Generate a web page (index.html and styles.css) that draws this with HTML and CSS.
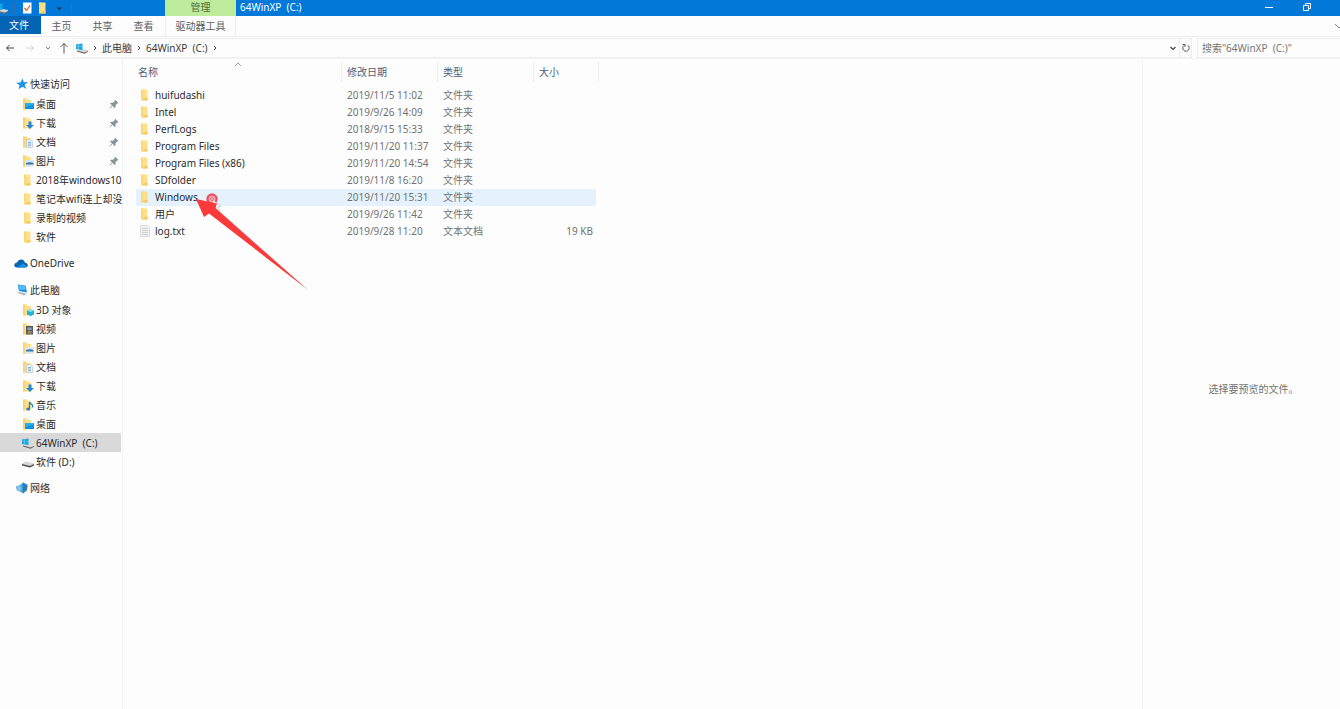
FILE: index.html
```html
<!DOCTYPE html>
<html lang="zh-CN">
<head>
<meta charset="utf-8">
<title>64WinXP (C:)</title>
<link rel="stylesheet" href="styles.css">
</head>
<body>
<svg class="defs" aria-hidden="true">
  <symbol id="folder" viewBox="0 0 12 12"><path d="M2 .5h6.500v11H2z" fill="#ffe08a"/><path d="M2 .5h2v10.500H2z" fill="#fbd873"/><path d="M4.500 9.500l4-1v3h-5z" fill="#f3cb66"/></symbol>
  <symbol id="base" viewBox="0 0 12 12"><path d="M1 .5h4l1 1.500h3v9.500H1z" fill="#ffe08a"/><path d="M1 .5h2v11H1z" fill="#f9d371"/></symbol>
  <symbol id="desktop" viewBox="0 0 12 12"><use href="#base"/><path d="M3 5h9v6H3z" fill="#0a95e6"/><path d="M3 5h9v1.500L3 9z" fill="#27aef5"/></symbol>
  <symbol id="download" viewBox="0 0 12 12"><use href="#base"/><path d="M6.500 4.500h3V8H12l-4 4-4-4h2.500z" fill="#2786d3"/></symbol>
  <symbol id="doc" viewBox="0 0 12 12"><use href="#base"/><path d="M4.500 3.500h4l2 2v6h-6z" fill="#e8f0f5" stroke="#a9bdca" stroke-width=".6"/><path d="M6 6.500h3M6 8h3M6 9.500h3" stroke="#5f9dc9" stroke-width=".7"/></symbol>
  <symbol id="picture" viewBox="0 0 12 12"><use href="#base"/><path d="M3 5h9v6.500H3z" fill="#d7e9f5"/><path d="M4 8q4-1.500 7.500 0v1.500H4z" fill="#3878a9"/></symbol>
  <symbol id="cube" viewBox="0 0 12 12"><use href="#base"/><path d="M8.500 5L12 6.500v4L8.500 12 5 10.500v-4z" fill="#1eb5d6"/><path d="M8.500 5L12 6.500 8.500 8 5 6.500z" fill="#8ce4f2"/></symbol>
  <symbol id="video" viewBox="0 0 12 12"><use href="#base"/><path d="M4 3h7v8.500H4z" fill="#565b65"/><path d="M5.500 4.500h4v2.500h-4z" fill="#8fa3bc"/><path d="M5.500 8h4v2.500h-4z" fill="#a88b55"/></symbol>
  <symbol id="music" viewBox="0 0 12 12"><use href="#base"/><path d="M7.500 3v6.500M7.500 3q1 2 3 3 .5 1-.5 2.500" fill="none" stroke="#1582cc" stroke-width="1.300"/><ellipse cx="6.200" cy="10" rx="1.900" ry="1.500" fill="#1582cc"/></symbol>
  <symbol id="drive" viewBox="0 0 12 12"><path d="M0 7.500L4 5.500l8 2v1.500L8 11.500 0 9z" fill="#d5d5d5"/><path d="M0 8l8 2 4-2v1.500L8 11.500 0 9.500z" fill="#4e4e4e"/></symbol>
  <symbol id="windrive" viewBox="0 0 12 12"><path d="M1 8L4 6.500l8 1.500v1.500L8.500 11.500 1 9.500z" fill="#d8d8d8"/><path d="M1 8.500l7.500 2L12 9v.8l-3.500 2L1 9.500z" fill="#666"/><path d="M0 2.500l2.700-.5v2.700H0zM3 2l3.500-.5v3.200H3zM0 5h2.700v2.500L0 7zM3 5h3.500v3L3 7.500z" fill="#12a8ea"/></symbol>
  <symbol id="star" viewBox="0 0 12 12"><path d="M6.500.5l1.300 3.800 4.200-.2-3.300 2.700 1.600 4.200L6.500 8.800 2.600 11.300l1-4.100L0 4.700l4.500-.3z" fill="#1c95e3"/></symbol>
  <symbol id="cloud" viewBox="0 0 14 12"><path d="M3 10.500Q0 10.300 .3 7.800 .8 5.800 3 5.500 4.500 2 8 2.500q2.500.5 3 3.300 3 .5 2.800 2.700-.3 2-2.500 2z" fill="#0a64b4"/><path d="M3 10.500l6-4 4.300 3q-.8 1-2 1z" fill="#1d8fe0"/></symbol>
  <symbol id="pc" viewBox="0 0 12 12"><path d="M1.500.5L9.500 1.500 11 8.500 3 7z" fill="#1a8fe0"/><path d="M2 1l7 1 .8 3.500L2.800 6z" fill="#5ab9f1"/><path d="M1 8.500L4 8l7 1.700-3 1.800z" fill="#aebdc9"/></symbol>
  <symbol id="network" viewBox="0 0 12 12"><path d="M0 4.500L4 3l3-2.500 4.500 2.500-.5 5-4 3.500-3-2-3-1z" fill="#4aa7dd"/><path d="M7 .5l4.500 2.500-.5 5-4 3.500-.5-5z" fill="#2b80bb"/><path d="M0 4.500l4-1 2 3-2 3-3-1z" fill="#7dc2e8"/></symbol>
  <symbol id="text" viewBox="0 0 12 12"><path d="M1.500.5h7l2 2v9h-9z" fill="#f1f1f1" stroke="#d0d0d0" stroke-width=".7"/><path d="M3 3.500h6M3 5.500h6M3 7.500h6M3 9.500h6" stroke="#b9c3ca" stroke-width=".7"/></symbol>
  <symbol id="pin" viewBox="0 0 12 12"><path d="M7 1.500L10.500 5l-1 .5-.5 0L7.500 7.500l0 2-1 .5-2-2.300L2 10.500l-.5-.5L4 7.300 2 5.500 3 4.700l2 0L6.700 3z" fill="#8a949c"/></symbol>
</svg>

<header class="titlebar">
  <div class="quick">
    <svg class="icon"><use href="#windrive"/></svg>
    <span class="bar"></span>
    <svg class="icon" viewBox="0 0 12 12"><path d="M2 .5h8.500v11H2z" fill="#fff"/><path d="M3.500 6l2 2.500L9 3.500" fill="none" stroke="#e0622c" stroke-width="1.300"/></svg>
    <svg class="icon"><use href="#folder"/></svg>
    <svg class="icon" viewBox="0 0 12 12"><path d="M4 5.500h4.500L6.200 8z" fill="#06233f"/></svg>
    <span class="bar"></span>
  </div>
  <div class="context">管理</div>
  <h1 class="title">64WinXP  (C:)</h1>
  <div class="controls">
    <button aria-label="最小化"><svg class="icon" viewBox="0 0 12 12"><path d="M2 6.500h8" stroke="#fff" fill="none"/></svg></button>
    <button aria-label="还原"><svg class="icon" viewBox="0 0 12 12"><path d="M2.500 4.500h5v5h-5zM4.500 4V2.500h5v5H8" stroke="#fff" fill="none"/></svg></button>
  </div>
</header>

<nav class="tabs">
  <button class="tab file">文件</button>
  <button class="tab">主页</button>
  <button class="tab">共享</button>
  <button class="tab">查看</button>
  <button class="tab tool">驱动器工具</button>
  <button class="expand" aria-label="展开功能区"><svg class="icon" viewBox="0 0 12 12"><path d="M3 4l4 4 4-4" stroke="#888" fill="none"/></svg></button>
</nav>

<div class="navbar">
  <div class="arrows">
    <button aria-label="后退"><svg class="icon" viewBox="0 0 12 12"><path d="M10 6H2.500M5.500 3l-3 3 3 3" stroke="#444" fill="none"/></svg></button>
    <button aria-label="前进"><svg class="icon" viewBox="0 0 12 12"><path d="M2 6h7.500M6.500 3l3 3-3 3" stroke="#d2d2d2" fill="none"/></svg></button>
    <button class="small" aria-label="最近"><svg class="icon" viewBox="0 0 12 12"><path d="M4 5l2 2 2-2" stroke="#777" fill="none"/></svg></button>
    <button aria-label="上移"><svg class="icon" viewBox="0 0 12 12"><path d="M6 11.500v-10M2.500 5L6 1.500 9.500 5" stroke="#555" fill="none"/></svg></button>
  </div>
  <div class="address">
    <svg class="icon"><use href="#windrive"/></svg>
    <svg class="chev" viewBox="0 0 6 12"><path d="M2 4l2 2-2 2" stroke="#444" fill="none"/></svg>
    <span>此电脑</span>
    <svg class="chev" viewBox="0 0 6 12"><path d="M2 4l2 2-2 2" stroke="#444" fill="none"/></svg>
    <span>64WinXP  (C:)</span>
    <svg class="chev" viewBox="0 0 6 12"><path d="M2 4l2 2-2 2" stroke="#444" fill="none"/></svg>
    <button class="drop" aria-label="历史记录"><svg class="icon" viewBox="0 0 12 12"><path d="M3.500 5L6 7.500 8.500 5" stroke="#444" stroke-width="1.200" fill="none"/></svg></button>
    <button class="refresh" aria-label="刷新"><svg class="icon" viewBox="0 0 12 12"><path d="M7.500 3.200A3.200 3.200 0 1 1 4 3.500M2.500 2.500H5V5" stroke="#555" fill="none"/></svg></button>
  </div>
  <input class="search" type="text" aria-label="搜索" placeholder='搜索"64WinXP  (C:)"'>
</div>

<div class="body">
  <aside class="tree">
    <ul>
      <li class="head"><svg class="icon"><use href="#star"/></svg>快速访问</li>
      <li><svg class="icon"><use href="#desktop"/></svg><span>桌面</span><svg class="icon pin"><use href="#pin"/></svg></li>
      <li><svg class="icon"><use href="#download"/></svg><span>下载</span><svg class="icon pin"><use href="#pin"/></svg></li>
      <li><svg class="icon"><use href="#doc"/></svg><span>文档</span><svg class="icon pin"><use href="#pin"/></svg></li>
      <li><svg class="icon"><use href="#picture"/></svg><span>图片</span><svg class="icon pin"><use href="#pin"/></svg></li>
      <li><svg class="icon"><use href="#folder"/></svg><span>2018年windows10</span></li>
      <li><svg class="icon"><use href="#folder"/></svg><span>笔记本wifi连上却没</span></li>
      <li><svg class="icon"><use href="#folder"/></svg><span>录制的视频</span></li>
      <li><svg class="icon"><use href="#folder"/></svg><span>软件</span></li>
    </ul>
    <ul>
      <li class="head"><svg class="icon cloud"><use href="#cloud"/></svg>OneDrive</li>
    </ul>
    <ul>
      <li class="head"><svg class="icon"><use href="#pc"/></svg>此电脑</li>
      <li><svg class="icon"><use href="#cube"/></svg><span>3D 对象</span></li>
      <li><svg class="icon"><use href="#video"/></svg><span>视频</span></li>
      <li><svg class="icon"><use href="#picture"/></svg><span>图片</span></li>
      <li><svg class="icon"><use href="#doc"/></svg><span>文档</span></li>
      <li><svg class="icon"><use href="#download"/></svg><span>下载</span></li>
      <li><svg class="icon"><use href="#music"/></svg><span>音乐</span></li>
      <li><svg class="icon"><use href="#desktop"/></svg><span>桌面</span></li>
      <li class="current"><svg class="icon"><use href="#windrive"/></svg><span>64WinXP  (C:)</span></li>
      <li><svg class="icon"><use href="#drive"/></svg><span>软件 (D:)</span></li>
    </ul>
    <ul>
      <li class="head"><svg class="icon"><use href="#network"/></svg>网络</li>
    </ul>
  </aside>

  <main class="files">
    <table>
      <colgroup><col class="c-name"><col class="c-mid"><col class="c-mid"><col class="c-size"></colgroup>
      <thead>
        <tr><th>名称<svg class="sort" viewBox="0 0 8 5"><path d="M1 4l3-3 3 3" stroke="#999" fill="none"/></svg></th><th>修改日期</th><th>类型</th><th>大小</th></tr>
      </thead>
      <tbody>
        <tr><td><svg class="icon"><use href="#folder"/></svg>huifudashi</td><td>2019/11/5 11:02</td><td>文件夹</td><td></td></tr>
        <tr><td><svg class="icon"><use href="#folder"/></svg>Intel</td><td>2019/9/26 14:09</td><td>文件夹</td><td></td></tr>
        <tr><td><svg class="icon"><use href="#folder"/></svg>PerfLogs</td><td>2018/9/15 15:33</td><td>文件夹</td><td></td></tr>
        <tr><td><svg class="icon"><use href="#folder"/></svg>Program Files</td><td>2019/11/20 11:37</td><td>文件夹</td><td></td></tr>
        <tr><td><svg class="icon"><use href="#folder"/></svg>Program Files (x86)</td><td>2019/11/20 14:54</td><td>文件夹</td><td></td></tr>
        <tr><td><svg class="icon"><use href="#folder"/></svg>SDfolder</td><td>2019/11/8 16:20</td><td>文件夹</td><td></td></tr>
        <tr class="hover"><td><svg class="icon"><use href="#folder"/></svg>Windows</td><td>2019/11/20 15:31</td><td>文件夹</td><td></td></tr>
        <tr><td><svg class="icon"><use href="#folder"/></svg>用户</td><td>2019/9/26 11:42</td><td>文件夹</td><td></td></tr>
        <tr><td><svg class="icon"><use href="#text"/></svg>log.txt</td><td>2019/9/28 11:20</td><td>文本文档</td><td>19 KB</td></tr>
      </tbody>
    </table>
    <svg class="pointer" viewBox="0 0 116 100" aria-hidden="true">
      <circle cx="16" cy="8" r="4.500" fill="#f7b9c4" stroke="#ee5062" stroke-width="2.400"/>
      <circle cx="16" cy="8" r="1.600" fill="none" stroke="#ee5062" stroke-width=".8"/>
      <path d="M17 9l8 6.500-3.500.5 2 4-2 1-2-4-2.500 2z" fill="#fff" stroke="#b5b5b5" stroke-width=".7"/>
      <path d="M0 8L21 12.500 19.500 17 112 99 13 22.500 8 26z" fill="#fb3b3b"/>
    </svg>
  </main>

  <aside class="preview">选择要预览的文件。</aside>
</div>
</body>
</html>
```
FILE: styles.css
```css
* { box-sizing: border-box; }

body {
  margin: 0;
  height: 100vh;
  display: flex;
  flex-direction: column;
  overflow: hidden;
  background: #fdfdfd;
  color: #2b2b2b;
  font: 10px/16px "Noto Sans", "Noto Sans CJK SC", sans-serif;
}

button {
  padding: 0;
  border: 0;
  background: none;
  color: inherit;
  font: inherit;
  display: flex;
  align-items: center;
  justify-content: center;
}

.defs { position: absolute; width: 0; height: 0; }
.icon { width: 12px; height: 12px; flex: none; }

.titlebar {
  display: flex;
  height: 16px;
  flex: none;
  background: #0279d8;
  color: #fff;
  line-height: 15px;
}
.quick {
  width: 165px;
  display: flex;
  align-items: center;
  gap: 4px;
  margin-left: -4px;
  margin-right: 4px;
}
.quick .bar { width: 1px; height: 11px; margin: 0 2px; background: #3a6fa5; }
.context {
  width: 71px;
  background: #bdec9c;
  color: #4c6b3c;
  text-align: center;
}
.title { margin: 0 auto 0 4px; font: inherit; white-space: pre; }
.controls { display: flex; gap: 26px; padding-right: 27px; }
.controls button { height: 14px; }

.tabs {
  display: flex;
  height: 21px;
  flex: none;
  border-bottom: 1px solid #ececec;
  color: #5c5c5c;
}
.tab { width: 41px; }
.tab.file { height: 18px; background: #0364b4; color: #fff; padding-right: 3px; }
.tab.tool { width: 71px; margin-left: 1px; border: solid #eee; border-width: 0 1px; }
.expand { margin-left: auto; margin-right: -4px; }

.navbar {
  display: flex;
  flex: none;
  height: 22px;
  padding-top: 1px;
  border-bottom: 1px solid #f4f4f4;
}
.arrows { display: flex; align-items: center; width: 73px; gap: 8px; padding-left: 4px; }
.arrows .small { margin-left: -2px; margin-right: -4px; }
.address {
  flex: 1;
  display: flex;
  align-items: center;
  gap: 4px;
  margin-right: 5px;
  padding-left: 2px;
  border: 1px solid #efefef;
  color: #3a3a3a;
  white-space: pre;
}
.chev { width: 6px; height: 12px; flex: none; }
.drop { margin-left: auto; margin-right: -4px; }
.refresh { align-self: stretch; width: 12px; border-left: 1px solid #eee; }
.search {
  width: 143px;
  padding: 0 4px;
  border: 1px solid #efefef;
  border-right: 0;
  background: transparent;
  font: inherit;
}
.search::placeholder { color: #757575; white-space: pre; opacity: 1; }

.body { flex: 1; display: flex; min-height: 0; }

.tree {
  width: 123px;
  flex: none;
  padding: 15px 1px 0 0;
  border-right: 1px solid #f3f3f3;
  overflow: hidden;
}
.tree ul { list-style: none; margin: 0 0 7px; padding: 0; }
.tree li {
  display: flex;
  align-items: center;
  gap: 2px;
  height: 19px;
  padding-left: 22px;
  white-space: pre;
}
.tree .head { height: 20px; padding-left: 16px; }
.tree .cloud { width: 14px; margin-left: -2px; }
.tree .current { background: #d9d9d9; }
.tree .pin { margin-left: auto; margin-right: 1px; }

.files { position: relative; flex: 1; padding: 3px 0 0 13px; }
.files table { width: 463px; table-layout: fixed; border-spacing: 0; }
.c-name { width: 206px; }
.c-mid { width: 96px; }
.c-size { width: 65px; }
.files th {
  position: relative;
  height: 20px;
  padding: 0 0 0 5px;
  border-right: 1px solid #efefef;
  color: #4c607a;
  font-weight: 400;
  text-align: left;
}
.files th:first-child { padding-left: 2px; }
.sort { position: absolute; left: 98px; top: 0; width: 8px; height: 5px; }
.files tbody::before { content: ""; display: block; height: 5px; }
.files td {
  height: 17px;
  padding: 0 0 0 5px;
  color: #727272;
  line-height: 17px;
  white-space: nowrap;
}
.files td:first-child { padding-left: 3px; color: #2b2b2b; }
.files td .icon { margin-right: 4px; vertical-align: -2px; }
.files td:last-child {
  padding-right: 3px;
  border-right: 3px solid transparent;
  background-clip: padding-box;
  text-align: right;
}
.hover td { background-color: #e5f2fe; }
.pointer { position: absolute; left: 73px; top: 132px; width: 116px; height: 100px; }

.preview {
  width: 198px;
  flex: none;
  display: flex;
  align-items: center;
  justify-content: center;
  padding: 10px 0 0 24px;
  border-left: 1px solid #f3f3f3;
  color: #727272;
}
```
